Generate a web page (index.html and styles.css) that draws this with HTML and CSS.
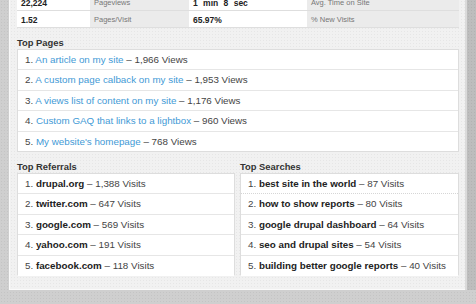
FILE: index.html
```html
<!DOCTYPE html>
<html>
<head>
<meta charset="utf-8">
<link rel="stylesheet" href="styles.css">
</head>
<body>
<div class="page">
  <div class="panel">
    <table class="stats">
      <tr>
        <td class="val c1">22,224</td>
        <td class="lbl c2">Pageviews</td>
        <td class="val c3">1 min 8 sec</td>
        <td class="lbl c4">Avg. Time on Site</td>
      </tr>
      <tr>
        <td class="val">1.52</td>
        <td class="lbl">Pages/Visit</td>
        <td class="val">65.97%</td>
        <td class="lbl">% New Visits</td>
      </tr>
    </table>

    <section class="block">
      <h3 class="title">Top Pages</h3>
      <ol class="list">
        <li>1. <a href="#">An article on my site</a> – 1,966 Views</li>
        <li>2. <a href="#">A custom page calback on my site</a> – 1,953 Views</li>
        <li>3. <a href="#">A views list of content on my site</a> – 1,176 Views</li>
        <li>4. <a href="#">Custom GAQ that links to a lightbox</a> – 960 Views</li>
        <li>5. <a href="#">My website's homepage</a> – 768 Views</li>
      </ol>
    </section>

    <div class="cols">
      <section class="block">
        <h3 class="title">Top Referrals</h3>
        <ol class="list open">
          <li>1. <b>drupal.org</b> – 1,388 Visits</li>
          <li>2. <b>twitter.com</b> – 647 Visits</li>
          <li>3. <b>google.com</b> – 569 Visits</li>
          <li>4. <b>yahoo.com</b> – 191 Visits</li>
          <li>5. <b>facebook.com</b> – 118 Visits</li>
        </ol>
      </section>
      <section class="block">
        <h3 class="title">Top Searches</h3>
        <ol class="list open">
          <li class="dotted">1. <b>best site in the world</b> – 87 Visits</li>
          <li>2. <b>how to show reports</b> – 80 Visits</li>
          <li>3. <b>google drupal dashboard</b> – 64 Visits</li>
          <li>4. <b>seo and drupal sites</b> – 54 Visits</li>
          <li>5. <b>building better google reports</b> – 40 Visits</li>
        </ol>
      </section>
    </div>
  </div>
  <div class="strip"></div>
</div>
</body>
</html>
```

FILE: styles.css
```css
html, body {
  margin: 0;
  padding: 0;
}
body {
  width: 476px;
  height: 304px;
  overflow: hidden;
  background-color: #cfcfcf;
  background-image: radial-gradient(circle, #c4c4c4 0.7px, transparent 0.9px);
  background-size: 3px 3px;
  font-family: "Liberation Sans", Arial, sans-serif;
  font-size: 9.8px;
  color: #333;
}
.page {
  display: flex;
  align-items: flex-start;
  height: 304px;
}
.panel {
  width: 442px;
  padding: 0 6px 13px 7px;
  margin: -6px 0 0 9px;
  background-color: #f1f1f1;
  background-image: radial-gradient(circle, #e6e6e6 0.7px, transparent 0.9px);
  background-size: 3px 3px;
  border-left: 1px solid #f9f9f9;
  border-bottom: 1px solid #fafafa;
}
.strip {
  width: 9px;
  height: 290px;
  border-left: 2px solid #dadada;
  background-color: #bdbdbd;
  background-image: radial-gradient(circle, #b2b2b2 0.7px, transparent 0.9px);
  background-size: 3px 3px;
}
.stats {
  width: 442px;
  border-collapse: collapse;
  table-layout: fixed;
}
.stats td {
  height: 15px;
  padding: 1px 4px 0;
  border-bottom: 1px solid #dedede;
  white-space: nowrap;
  overflow: hidden;
  vertical-align: middle;
}
.stats .c1 { width: 65px; }
.stats .c2 { width: 91px; }
.stats .c3 { width: 110px; }
.stats .c4 { width: 144px; }
.stats .val {
  background: #fff;
  font-weight: bold;
  font-size: 8.5px;
  word-spacing: 3px;
  color: #222;
}
.stats .lbl {
  background: #ebebeb;
  font-size: 7.5px;
  color: #777;
}
.block {
  margin-top: 9px;
}
.title {
  margin: 0;
  font-size: 9.4px;
  line-height: 12px;
  font-weight: bold;
  color: #333;
}
.list {
  list-style: none;
  margin: 0;
  padding: 0;
  background: #fff;
  border: 1px solid #dddddd;
}
.list.open {
  border-bottom-color: transparent;
}
.list li {
  height: 18.4px;
  line-height: 18.4px;
  padding: 1px 0 0 7px;
  border-top: 1px solid #e6e6e6;
  white-space: nowrap;
  overflow: hidden;
  color: #444;
}
.list li:first-child {
  border-top: none;
}
.list li.dotted + li {
  border-top: 1px dotted #d6d6d6;
}
.list a {
  color: #3f9ad6;
  text-decoration: none;
}
.list b {
  color: #222;
}
.cols {
  display: grid;
  grid-template-columns: 218px 219px;
  column-gap: 5px;
}
```
